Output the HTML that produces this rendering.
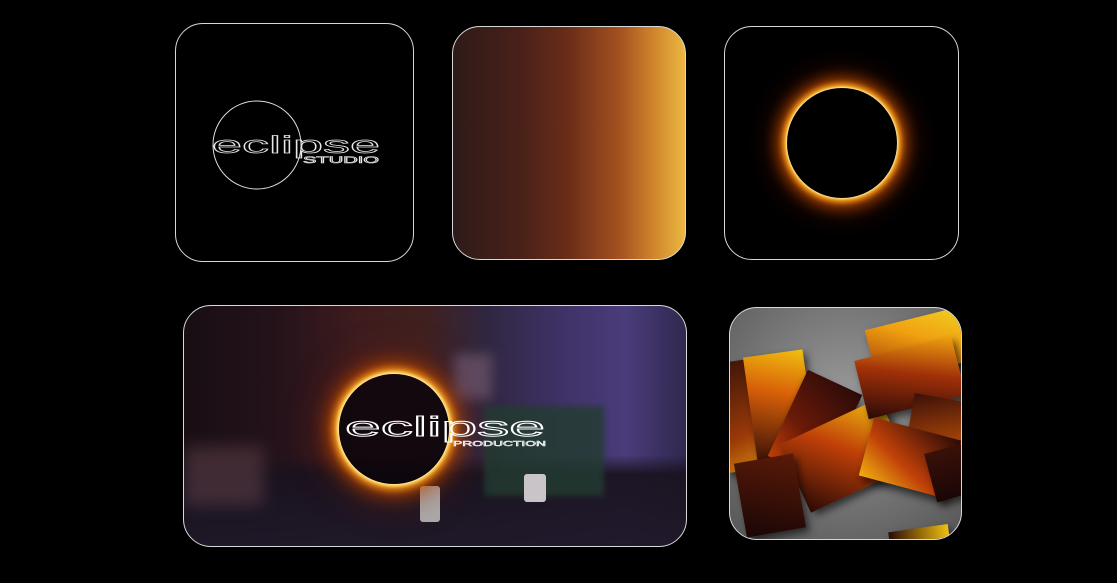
<!DOCTYPE html>
<html><head><style>
body{margin:0;width:1117px;height:583px;background:#000;position:relative;overflow:hidden;font-family:"Liberation Sans",sans-serif}
.c{position:absolute;box-sizing:border-box;border:1px solid #d8d8d8;border-radius:28px;overflow:hidden}
.bc{position:absolute;box-shadow:3px 5px 8px rgba(0,0,0,.6)}
</style></head><body>
<div class="c" style="left:175px;top:23px;width:239px;height:239px;background:#000">
<svg width="239" height="239" style="position:absolute;left:-1px;top:-1px">
<circle cx="82" cy="122" r="44" fill="none" stroke="#ddd" stroke-width="1"/>
<text x="37" y="130" font-size="24" textLength="168" lengthAdjust="spacingAndGlyphs" fill="none" stroke="#e8e8e8" stroke-width="0.7" font-family="Liberation Sans">eclipse</text>
<text x="128" y="140" font-size="9" textLength="76" lengthAdjust="spacingAndGlyphs" fill="none" stroke="#e8e8e8" stroke-width="0.6">STUDIO</text>
</svg></div>
<div class="c" style="left:452px;top:26px;width:234px;height:234px;background:linear-gradient(90deg,#2e1a19 0%,#4a2119 30%,#6b2d18 50%,#a4521f 72%,#d48a2e 88%,#ebb841 100%)"></div>
<div class="c" style="left:724px;top:26px;width:235px;height:234px;background:#000">
<div style="position:absolute;left:62px;top:61px;width:110px;height:110px;border-radius:50%;background:#000;box-shadow:0 0 2px 1px #fff3b0,0 0 6px 4px #ffb020,0 0 16px 8px #c85000,0 0 30px 12px rgba(130,35,0,.5)"></div>
</div>
<div class="c" style="left:183px;top:305px;width:504px;height:242px;background:
linear-gradient(180deg,rgba(0,0,0,0) 0%,rgba(0,0,0,0) 62%,rgba(25,18,30,.92) 70%,rgba(30,24,40,.95) 100%),
linear-gradient(90deg,#180e14 0%,#24121a 18%,#3e1c1e 35%,#40201f 48%,#302640 60%,#3e3266 75%,#4a3c7a 88%,#30284e 100%)">
<div style="position:absolute;left:270px;top:48px;width:38px;height:45px;background:#5e4a60;filter:blur(6px)"></div>
<div style="position:absolute;left:300px;top:100px;width:120px;height:90px;background:#233c30;filter:blur(3px);opacity:.8"></div>
<div style="position:absolute;left:340px;top:168px;width:22px;height:28px;background:#c8c4c8;border-radius:3px"></div>
<div style="position:absolute;left:236px;top:180px;width:20px;height:36px;background:#aaa;border-radius:3px"></div>
<div style="position:absolute;left:0;top:140px;width:80px;height:60px;background:#5a3c45;filter:blur(8px);opacity:.6"></div>
<div style="position:absolute;left:155px;top:68px;width:110px;height:110px;border-radius:50%;background:rgba(10,5,10,.85);box-shadow:0 0 3px 2px #fff0a0,0 0 8px 5px #ffae20,0 0 20px 8px #d05000,0 0 36px 14px rgba(140,40,0,.5)"></div>
<svg width="504" height="242" style="position:absolute;left:-1px;top:-1px">
<text x="162" y="131" font-size="28" textLength="200" lengthAdjust="spacingAndGlyphs" fill="none" stroke="#fff" stroke-width="1">eclipse</text>
<text x="270" y="141" font-size="7" textLength="93" lengthAdjust="spacingAndGlyphs" fill="none" stroke="#fff" stroke-width="0.5">PRODUCTION</text>
</svg></div>
<div class="c" style="left:729px;top:307px;width:233px;height:233px;background:radial-gradient(circle at 50% 40%,#9a9a9a,#6a6a6a 70%,#555)">
<div class="bc" style="left:-10px;top:50px;width:80px;height:110px;transform:rotate(-8deg);background:linear-gradient(160deg,#3a120a,#9a3a08 60%,#e8a010)"></div>
<div class="bc" style="left:20px;top:45px;width:60px;height:105px;transform:rotate(-8deg);background:linear-gradient(200deg,#f0c010,#d86008 40%,#3a1008)"></div>
<div class="bc" style="left:55px;top:70px;width:60px;height:95px;transform:rotate(25deg);background:linear-gradient(200deg,#2a0a08,#6a1a08 60%,#c04008)"></div>
<div class="bc" style="left:60px;top:110px;width:110px;height:75px;transform:rotate(-25deg);background:linear-gradient(45deg,#2a0a06,#c04008 55%,#f0c010)"></div>
<div class="bc" style="left:10px;top:150px;width:60px;height:75px;transform:rotate(-10deg);background:linear-gradient(200deg,#5a1a08,#1a0606)"></div>
<div class="bc" style="left:140px;top:10px;width:95px;height:55px;transform:rotate(-14deg);background:linear-gradient(30deg,#9a3006,#f0a010 60%,#f0d020)"></div>
<div class="bc" style="left:130px;top:40px;width:100px;height:60px;transform:rotate(-14deg);background:linear-gradient(20deg,#2a0a08,#a03008 55%,#f0a010)"></div>
<div class="bc" style="left:180px;top:90px;width:60px;height:50px;transform:rotate(10deg);background:linear-gradient(160deg,#3a1008,#c05008)"></div>
<div class="bc" style="left:135px;top:120px;width:90px;height:60px;transform:rotate(15deg);background:linear-gradient(30deg,#f0b010,#c04008 40%,#2a0a08)"></div>
<div class="bc" style="left:200px;top:140px;width:40px;height:50px;transform:rotate(-15deg);background:linear-gradient(#3a1008,#1a0606)"></div>
<div class="bc" style="left:160px;top:220px;width:60px;height:30px;transform:rotate(-8deg);background:linear-gradient(90deg,#2a0a08,#f0c010)"></div>
</div>
</body></html>
